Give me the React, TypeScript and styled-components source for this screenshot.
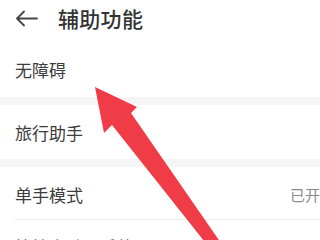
import React from 'react';
import { createGlobalStyle, styled } from 'styled-components';

const GlobalStyle = createGlobalStyle`
  *, *::before, *::after {
    box-sizing: border-box;
  }
  html, body {
    margin: 0;
    padding: 0;
    background: #ffffff;
    overflow: hidden;
  }
  body {
    font-family: "Noto Sans CJK SC", "Noto Sans", sans-serif;
  }
`;

const Screen = styled.div`
  position: relative;
  width: 360px;
  height: 240px;
  background: #ffffff;
`;

const Header = styled.div`
  display: flex;
  align-items: center;
  height: 36px;
  padding-left: 15px;
  gap: 20px;
`;

const BackButton = styled.button`
  all: unset;
  display: flex;
  align-items: center;
  color: #444444;
`;

const Title = styled.h1`
  margin: 0;
  font-size: 21px;
  font-weight: 500;
  color: #333333;
  letter-spacing: 0.3px;
`;

const Row = styled.div<{ $h: number; $shift?: number }>`
  display: flex;
  align-items: center;
  justify-content: space-between;
  height: ${(p) => p.$h}px;
  padding: ${(p) => p.$shift ?? 0}px 11px 0 15px;
`;

const Label = styled.span`
  font-size: 17px;
  color: #3c3c3c;
`;

const Value = styled.span`
  display: flex;
  align-items: center;
  gap: 6px;
  font-size: 15px;
  color: #8a8a8a;
`;

const Band = styled.div`
  height: 8px;
  background: #f5f5f5;
`;

const Divider = styled.div`
  height: 1px;
  margin-left: 15px;
  background: #ebebeb;
`;

const Overlay = styled.svg`
  position: absolute;
  left: 0;
  top: 0;
  pointer-events: none;
`;

const App = () => {
  return (
    <>
      <GlobalStyle />
      <Screen>
        <Header>
          <BackButton>
            <svg width="23" height="17" viewBox="0 0 23 17" fill="none">
              <path
                d="M9 1.5 L2 8.5 L9 15.5 M2 8.5 H22"
                stroke="currentColor"
                strokeWidth="1.8"
                strokeLinecap="round"
                strokeLinejoin="round"
              />
            </svg>
          </BackButton>
          <Title>辅助功能</Title>
        </Header>
        <Row $h={61} $shift={6}>
          <Label>无障碍</Label>
        </Row>
        <Band />
        <Row $h={54}>
          <Label>旅行助手</Label>
        </Row>
        <Band />
        <Row $h={52} $shift={3}>
          <Label>单手模式</Label>
          <Value>
            已开启
            <svg width="8" height="14" viewBox="0 0 8 14" fill="none">
              <path d="M1 1 L7 7 L1 13" stroke="#b0b0b0" strokeWidth="1.5" />
            </svg>
          </Value>
        </Row>
        <Divider />
        <Row $h={52}>
          <Label>快捷启动及手势</Label>
        </Row>
        <Overlay width="320" height="240" viewBox="0 0 320 240">
          <polygon
            points="95,87 137,107 131,113 223,246 208,246 112,125 104,133"
            fill="#f03c46"
          />
        </Overlay>
      </Screen>
    </>
  );
};

export default App;
